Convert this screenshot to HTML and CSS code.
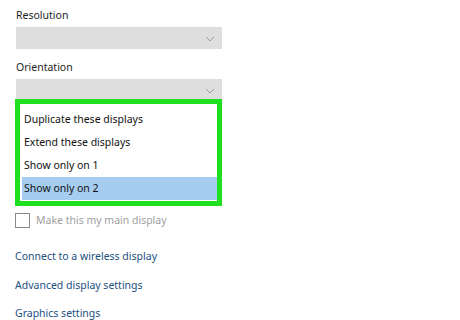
FILE: index.html
```html
<!DOCTYPE html>
<html>
<head>
<meta charset="utf-8">
<link rel="stylesheet" href="styles.css">
</head>
<body>
<div class="panel">
  <div class="label">Resolution</div>
  <div class="select">
    <svg class="chev" width="10" height="6" viewBox="0 0 10 6"><polyline points="1,1 5,5 9,1" fill="none" stroke="#9a9a9a" stroke-width="1"/></svg>
  </div>
  <div class="label second">Orientation</div>
  <div class="select">
    <svg class="chev" width="10" height="6" viewBox="0 0 10 6"><polyline points="1,1 5,5 9,1" fill="none" stroke="#9a9a9a" stroke-width="1"/></svg>
  </div>
  <div class="popup">
    <div class="item">Duplicate these displays</div>
    <div class="item">Extend these displays</div>
    <div class="item">Show only on 1</div>
    <div class="item selected">Show only on 2</div>
  </div>
  <div class="check-row">
    <span class="box"></span>
    <span class="check-text">Make this my main display</span>
  </div>
  <div class="link first">Connect to a wireless display</div>
  <div class="link l2">Advanced display settings</div>
  <div class="link l3">Graphics settings</div>
</div>
</body>
</html>
```
FILE: styles.css
```css
html, body {
  margin: 0;
  padding: 0;
  background: #ffffff;
}
.panel {
  padding: 7px 0 0 15px;
  font-family: "Noto Sans", "Open Sans", sans-serif;
  font-size: 10.5px;
  color: #1e1e1e;
}
.label {
  line-height: 16px;
  height: 16px;
  padding-left: 1px;
  margin-bottom: 4px;
}
.label.second {
  margin-top: 10px;
}
.select {
  margin-left: 1px;
  width: 206px;
  height: 22px;
  background: #dedede;
  display: flex;
  align-items: center;
  justify-content: flex-end;
  padding-right: 7px;
  box-sizing: border-box;
}
.chev {
  display: block;
  margin-top: 1px;
}
.popup {
  margin-top: -2px;
  width: 207px;
  box-sizing: border-box;
  border: 5px solid #1fe01f;
  background: #ffffff;
  padding: 4px 0 1px 2px;
}
.item {
  height: 23px;
  line-height: 23px;
  padding-left: 2px;
  color: #111;
}
.item.selected {
  background: #a6cdf0;
}
.check-row {
  margin-top: 7px;
  display: flex;
  align-items: center;
  gap: 6px;
  height: 15px;
}
.box {
  width: 15px;
  height: 15px;
  box-sizing: border-box;
  border: 1.5px solid #8a8a8a;
}
.check-text {
  color: #a0a0a0;
  line-height: 15px;
}
.link {
  color: #1b4f80;
  line-height: 16px;
  height: 16px;
}
.link.first {
  margin-top: 20px;
}
.link.l2 {
  margin-top: 13px;
}
.link.l3 {
  margin-top: 12px;
}
```
